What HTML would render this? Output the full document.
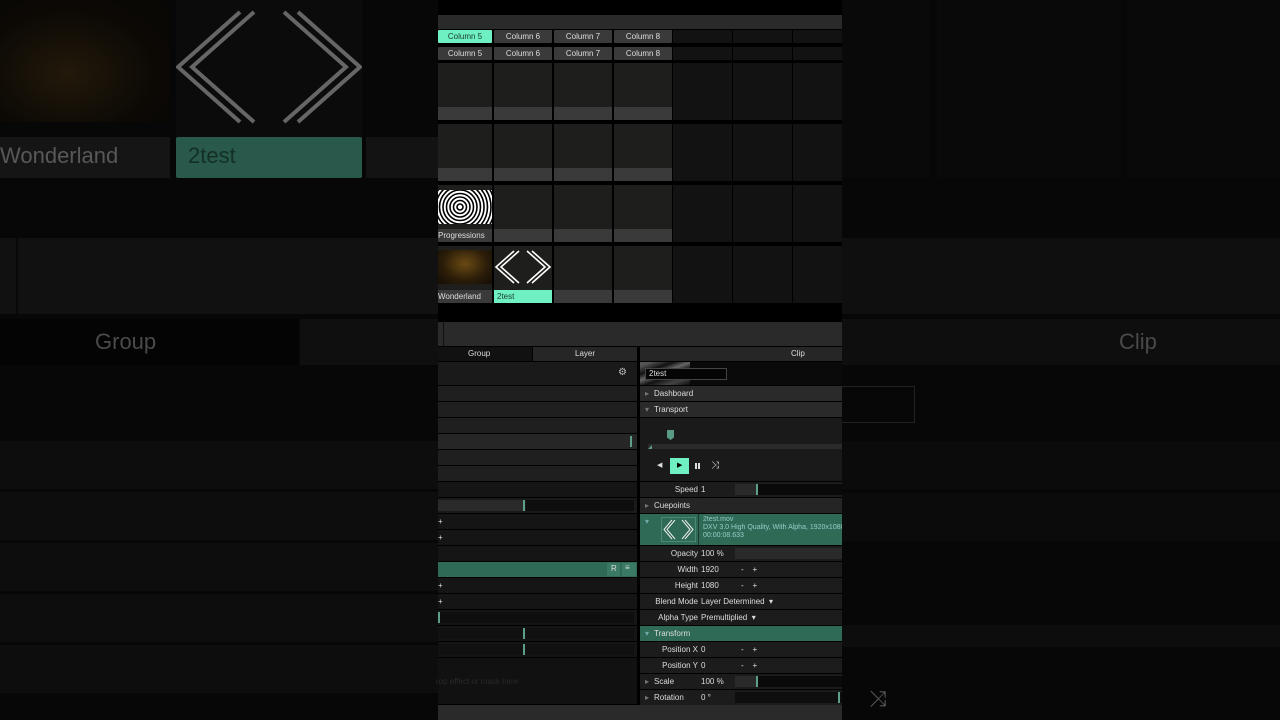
<!DOCTYPE html>
<html><head><meta charset="utf-8"><style>
*{margin:0;padding:0;box-sizing:border-box}
body{width:1280px;height:720px;background:#070707;position:relative;overflow:hidden;font-family:"Liberation Sans",sans-serif;}
div{position:absolute}
.t{font-size:8px;color:#ddd;white-space:nowrap}
.hd{background:#3a3a3a;color:#ddd;font-size:8px;text-align:center;line-height:13px;border-radius:1px}
.cell{background:#1e1e1c}
.strip{background:#3a3a3a}
.em{background:#121212}
.row{left:438px;width:199px;height:15px;background:#1f1f1f}
.rr{left:640px;width:202px;height:15px;background:#1c1c1c}
.lab{left:640px;width:58px;text-align:right;font-size:8px;color:#ddd;line-height:15px}
.val{left:701px;font-size:8px;color:#ddd;line-height:15px}
</style></head><body>
<!-- left blurred background -->
<div style="left:0;top:0;width:170px;height:122px;background:radial-gradient(ellipse at 40% 60%,#22190a,#0c0905 60%,#080705)"></div>
<div style="left:0;top:137px;width:170px;height:41px;background:#151515"></div>
<div style="left:0;top:143px;font-size:22px;color:#585858">Wonderland</div>
<div style="left:176px;top:0;width:186px;height:178px;background:#0b0b0b"></div>
<svg style="position:absolute;left:176px;top:0" width="186" height="137"><g fill="none" stroke="#666" stroke-width="4"><path d="M64 12 L2 67 L64 122"/><path d="M78 12 L16 67 L78 122"/><path d="M122 12 L184 67 L122 122"/><path d="M108 12 L170 67 L108 122"/></g></svg>
<div style="left:176px;top:137px;width:186px;height:41px;background:#28594a;border-radius:2px"></div>
<div style="left:188px;top:143px;font-size:22px;color:#143026">2test</div>
<div style="left:366px;top:137px;width:72px;height:41px;background:#131313"></div>
<div style="left:0;top:238px;width:438px;height:76px;background:#111"></div>
<div style="left:16px;top:238px;width:2px;height:76px;background:#080808"></div>
<div style="left:0;top:319px;width:298px;height:46px;background:#040404"></div>
<div style="left:300px;top:319px;width:138px;height:46px;background:#0f0f0f"></div>
<div style="left:95px;top:329px;font-size:22px;color:#4a4a4a">Group</div>
<div style="left:0;top:441px;width:438px;height:48px;background:#0d0d0d"></div>
<div style="left:0;top:492px;width:438px;height:48px;background:#0d0d0d"></div>
<div style="left:0;top:543px;width:438px;height:48px;background:#0d0d0d"></div>
<div style="left:0;top:594px;width:438px;height:48px;background:#0d0d0d"></div>
<div style="left:0;top:645px;width:438px;height:48px;background:#0d0d0d"></div>
<!-- right blurred background -->
<div style="left:842px;top:0;width:88px;height:178px;background:#090909"></div>
<div style="left:937px;top:0;width:183px;height:178px;background:#090909"></div>
<div style="left:1127px;top:0;width:153px;height:178px;background:#090909"></div>
<div style="left:842px;top:238px;width:438px;height:76px;background:#0f0f0f"></div>
<div style="left:842px;top:319px;width:438px;height:46px;background:#0e0e0e"></div>
<div style="left:1119px;top:329px;font-size:22px;color:#4a4a4a">Clip</div>
<div style="left:838px;top:386px;width:77px;height:37px;border:1px solid #222"></div>
<div style="left:842px;top:441px;width:438px;height:48px;background:#0b0b0b"></div>
<div style="left:842px;top:493px;width:438px;height:48px;background:#0b0b0b"></div>
<div style="left:842px;top:625px;width:438px;height:22px;background:#0d0d0d"></div>
<div style="left:869px;top:686px;font-size:22px;color:#555">&#x2928;</div>

<!-- center panel -->
<div style="left:438px;top:0;width:404px;height:720px;background:#000"></div>
<div style="left:438px;top:15px;width:404px;height:14px;background:#2a2a2a"></div>
<div class="hd" style="left:438px;top:30px;width:54px;background:#6ef0c2;color:#1a3a30">Column 5</div>
<div class="hd" style="left:494px;top:30px;width:58px">Column 6</div>
<div class="hd" style="left:554px;top:30px;width:58px">Column 7</div>
<div class="hd" style="left:614px;top:30px;width:58px">Column 8</div>
<div class="em" style="left:673px;top:30px;width:59px;height:13px"></div>
<div class="em" style="left:733px;top:30px;width:59px;height:13px"></div>
<div class="em" style="left:793px;top:30px;width:49px;height:13px"></div>
<div class="hd" style="left:438px;top:47px;width:54px">Column 5</div>
<div class="hd" style="left:494px;top:47px;width:58px">Column 6</div>
<div class="hd" style="left:554px;top:47px;width:58px">Column 7</div>
<div class="hd" style="left:614px;top:47px;width:58px">Column 8</div>
<div class="em" style="left:673px;top:47px;width:59px;height:13px"></div>
<div class="em" style="left:733px;top:47px;width:59px;height:13px"></div>
<div class="em" style="left:793px;top:47px;width:49px;height:13px"></div>

<div class="cell" style="left:438px;top:63px;width:54px;height:57px"></div><div class="strip" style="left:438px;top:107px;width:54px;height:13px"></div>
<div class="cell" style="left:494px;top:63px;width:58px;height:57px"></div><div class="strip" style="left:494px;top:107px;width:58px;height:13px"></div>
<div class="cell" style="left:554px;top:63px;width:58px;height:57px"></div><div class="strip" style="left:554px;top:107px;width:58px;height:13px"></div>
<div class="cell" style="left:614px;top:63px;width:58px;height:57px"></div><div class="strip" style="left:614px;top:107px;width:58px;height:13px"></div>
<div class="em" style="left:673px;top:63px;width:59px;height:57px"></div><div class="em" style="left:733px;top:63px;width:59px;height:57px"></div><div class="em" style="left:793px;top:63px;width:49px;height:57px"></div>

<div class="cell" style="left:438px;top:124px;width:54px;height:57px"></div><div class="strip" style="left:438px;top:168px;width:54px;height:13px"></div>
<div class="cell" style="left:494px;top:124px;width:58px;height:57px"></div><div class="strip" style="left:494px;top:168px;width:58px;height:13px"></div>
<div class="cell" style="left:554px;top:124px;width:58px;height:57px"></div><div class="strip" style="left:554px;top:168px;width:58px;height:13px"></div>
<div class="cell" style="left:614px;top:124px;width:58px;height:57px"></div><div class="strip" style="left:614px;top:168px;width:58px;height:13px"></div>
<div class="em" style="left:673px;top:124px;width:59px;height:57px"></div><div class="em" style="left:733px;top:124px;width:59px;height:57px"></div><div class="em" style="left:793px;top:124px;width:49px;height:57px"></div>

<div class="cell" style="left:438px;top:185px;width:54px;height:57px"></div>
<svg style="position:absolute;left:438px;top:190px" width="54" height="34"><rect width="54" height="34" fill="#fff"/><g fill="none" stroke="#000" stroke-width="1.6"><circle cx="22" cy="17" r="3"/><circle cx="22" cy="17" r="6.5"/><circle cx="22" cy="17" r="10"/><circle cx="22" cy="17" r="13.5"/><circle cx="22" cy="17" r="17"/><circle cx="22" cy="17" r="20.5"/><circle cx="22" cy="17" r="24"/><circle cx="22" cy="17" r="27.5"/><circle cx="22" cy="17" r="31"/><circle cx="22" cy="17" r="34.5"/></g></svg>
<div class="strip" style="left:438px;top:229px;width:54px;height:13px"></div><div class="t" style="left:438px;top:231px">Progressions</div>
<div class="cell" style="left:494px;top:185px;width:58px;height:57px"></div><div class="strip" style="left:494px;top:229px;width:58px;height:13px"></div>
<div class="cell" style="left:554px;top:185px;width:58px;height:57px"></div><div class="strip" style="left:554px;top:229px;width:58px;height:13px"></div>
<div class="cell" style="left:614px;top:185px;width:58px;height:57px"></div><div class="strip" style="left:614px;top:229px;width:58px;height:13px"></div>
<div class="em" style="left:673px;top:185px;width:59px;height:57px"></div><div class="em" style="left:733px;top:185px;width:59px;height:57px"></div><div class="em" style="left:793px;top:185px;width:49px;height:57px"></div>

<div class="cell" style="left:438px;top:246px;width:54px;height:57px"></div>
<div style="left:438px;top:250px;width:54px;height:34px;background:radial-gradient(ellipse at 50% 40%,#6a4a14,#2a1c08 60%,#140e05)"></div>
<div class="strip" style="left:438px;top:290px;width:54px;height:13px"></div><div class="t" style="left:438px;top:292px">Wonderland</div>
<div class="cell" style="left:494px;top:246px;width:58px;height:57px"></div>
<svg style="position:absolute;left:494px;top:250px" width="58" height="34"><g fill="none" stroke="#fff" stroke-width="1.6"><path d="M20 1 L2 17 L20 33"/><path d="M25 1 L7 17 L25 33"/><path d="M33 1 L51 17 L33 33"/><path d="M38 1 L56 17 L38 33"/></g></svg>
<div style="left:494px;top:290px;width:58px;height:13px;background:#6ef0c2"></div><div class="t" style="left:497px;top:292px;color:#1a3a30">2test</div>
<div class="cell" style="left:554px;top:246px;width:58px;height:57px"></div><div class="strip" style="left:554px;top:290px;width:58px;height:13px"></div>
<div class="cell" style="left:614px;top:246px;width:58px;height:57px"></div><div class="strip" style="left:614px;top:290px;width:58px;height:13px"></div>
<div class="em" style="left:673px;top:246px;width:59px;height:57px"></div><div class="em" style="left:733px;top:246px;width:59px;height:57px"></div><div class="em" style="left:793px;top:246px;width:49px;height:57px"></div>

<div style="left:438px;top:322px;width:404px;height:24px;background:#2a2a2a"></div>
<div style="left:443px;top:322px;width:1px;height:24px;background:#111"></div>
<div style="left:438px;top:347px;width:94px;height:14px;background:#111"></div>
<div class="t" style="left:468px;top:349px">Group</div>
<div style="left:533px;top:347px;width:104px;height:14px;background:#262626"></div>
<div class="t" style="left:575px;top:349px">Layer</div>
<div style="left:640px;top:347px;width:202px;height:14px;background:#262626"></div>
<div class="t" style="left:791px;top:349px">Clip</div>

<div style="left:438px;top:362px;width:199px;height:23px;background:#1a1a1a"></div>
<div style="left:618px;top:367px;font-size:10px;color:#bbb">&#9881;</div>
<div class="row" style="top:386px"></div>
<div class="row" style="top:402px"></div>
<div class="row" style="top:418px"></div>
<div class="row" style="top:434px;background:#262626"></div><div style="left:630px;top:436px;width:2px;height:11px;background:#5aa08a"></div>
<div class="row" style="top:450px"></div>
<div class="row" style="top:466px"></div>
<div class="row" style="top:482px;background:#151515"></div>
<div class="row" style="top:498px;background:#1a1a1a"></div><div style="left:438px;top:500px;width:85px;height:11px;background:#2a2a2a"></div><div style="left:523px;top:500px;width:2px;height:11px;background:#5aa08a"></div><div style="left:526px;top:500px;width:108px;height:11px;background:#0e0e0e"></div>
<div class="row" style="top:514px;background:#151515"></div><div class="t" style="left:438px;top:517px">+</div>
<div class="row" style="top:530px;background:#151515"></div><div class="t" style="left:438px;top:533px">+</div>
<div class="row" style="top:546px;background:#151515"></div>
<div class="row" style="top:562px;background:#2e6a55"></div>
<div style="left:607px;top:563px;width:13px;height:13px;background:#3a7a65"></div><div class="t" style="left:611px;top:564px">R</div>
<div style="left:622px;top:563px;width:14px;height:13px;background:#3a7a65"></div><div class="t" style="left:625px;top:563px">&#8801;</div>
<div class="row" style="top:578px;background:#151515"></div><div class="t" style="left:438px;top:581px">+</div>
<div class="row" style="top:594px;background:#151515"></div><div class="t" style="left:438px;top:597px">+</div>
<div class="row" style="top:610px;background:#151515"></div><div style="left:438px;top:612px;width:196px;height:11px;background:#0e0e0e"></div><div style="left:438px;top:612px;width:2px;height:11px;background:#5aa08a"></div>
<div class="row" style="top:626px;background:#151515"></div><div style="left:438px;top:628px;width:196px;height:11px;background:#111"></div><div style="left:523px;top:628px;width:2px;height:11px;background:#5aa08a"></div>
<div class="row" style="top:642px;background:#151515"></div><div style="left:438px;top:644px;width:196px;height:11px;background:#111"></div><div style="left:523px;top:644px;width:2px;height:11px;background:#5aa08a"></div>
<div class="row" style="top:658px;height:46px;background:#111"></div>
<div class="t" style="left:436px;top:677px;color:#2a2a2a">rop effect or mask here</div>

<div style="left:640px;top:362px;width:202px;height:23px;background:#0a0a0a"></div>
<div style="left:640px;top:362px;width:50px;height:23px;background:linear-gradient(160deg,#555 10%,#111 30%,#666 45%,#111 60%,#444 80%,#0a0a0a)"></div>
<div style="left:645px;top:368px;width:82px;height:12px;background:#050505;border:1px solid #444"></div>
<div class="t" style="left:649px;top:369px">2test</div>
<div class="rr" style="top:386px;background:#2a2a2a"></div><div class="t" style="left:645px;top:389px;color:#777">&#9656;</div><div class="t" style="left:654px;top:389px">Dashboard</div>
<div class="rr" style="top:402px;background:#2a2a2a"></div><div class="t" style="left:645px;top:405px;color:#777">&#9662;</div><div class="t" style="left:654px;top:405px">Transport</div>
<div class="rr" style="top:418px;height:63px;background:#1a1a1a"></div>
<div style="left:648px;top:444px;width:194px;height:5px;background:#2a2a2a"></div>
<div style="left:667px;top:430px;width:7px;height:10px;background:#5a9a85;clip-path:polygon(0 0,100% 0,100% 75%,50% 100%,0 75%)"></div>
<div style="left:648px;top:445px;width:4px;height:4px;background:#5a9a85;clip-path:polygon(100% 0,100% 100%,0 100%)"></div>
<div class="t" style="left:657px;top:461px;font-size:7px">&#9664;</div>
<div style="left:670px;top:458px;width:19px;height:16px;background:#6ef0c2"></div><div class="t" style="left:677px;top:461px;font-size:7px;color:#000">&#9654;</div>
<div style="left:695px;top:463px;width:2px;height:6px;background:#ddd"></div><div style="left:698px;top:463px;width:2px;height:6px;background:#ddd"></div>
<div class="t" style="left:711px;top:460px;font-size:10px">&#x2928;</div>
<div class="rr" style="top:482px"></div><div class="lab" style="top:482px">Speed</div><div class="val" style="top:482px">1</div>
<div style="left:735px;top:484px;width:22px;height:11px;background:#2a2a2a"></div><div style="left:756px;top:484px;width:2px;height:11px;background:#5aa08a"></div><div style="left:758px;top:484px;width:84px;height:11px;background:#0a0a0a"></div>
<div class="rr" style="top:498px;background:#252525"></div><div class="t" style="left:645px;top:501px;color:#777">&#9656;</div><div class="t" style="left:654px;top:501px">Cuepoints</div>
<div class="rr" style="top:514px;height:31px;background:#2e6a55"></div>
<div class="t" style="left:645px;top:517px;color:#7aa">&#9662;</div>
<svg style="position:absolute;left:661px;top:517px" width="35" height="25"><rect x="0.5" y="0.5" width="34" height="24" fill="none" stroke="#4a8a75"/><g fill="none" stroke="#eee" stroke-width="1"><path d="M11 3 L3 12.5 L11 22"/><path d="M14 3 L6 12.5 L14 22"/><path d="M21 3 L29 12.5 L21 22"/><path d="M24 3 L32 12.5 L24 22"/></g></svg>
<div style="left:698px;top:514px;width:1px;height:31px;background:#1a3a30"></div>
<div class="t" style="left:703px;top:516px;font-size:7px;color:#9cc;line-height:8px;width:139px;overflow:hidden">2test.mov<br>DXV 3.0 High Quality, With Alpha, 1920x1080<br>00:00:08.633</div>
<div class="rr" style="top:546px"></div><div class="lab" style="top:546px">Opacity</div><div class="val" style="top:546px">100 %</div><div style="left:735px;top:548px;width:107px;height:11px;background:#2a2a2a"></div>
<div class="rr" style="top:562px"></div><div class="lab" style="top:562px">Width</div><div class="val" style="top:562px">1920</div><div class="val" style="left:741px;top:562px">-&nbsp;&nbsp;&nbsp;&nbsp;+</div>
<div class="rr" style="top:578px"></div><div class="lab" style="top:578px">Height</div><div class="val" style="top:578px">1080</div><div class="val" style="left:741px;top:578px">-&nbsp;&nbsp;&nbsp;&nbsp;+</div>
<div class="rr" style="top:594px"></div><div class="lab" style="top:594px">Blend Mode</div><div class="val" style="top:594px">Layer Determined &nbsp;&#9662;</div>
<div class="rr" style="top:610px"></div><div class="lab" style="top:610px">Alpha Type</div><div class="val" style="top:610px">Premultiplied &nbsp;&#9662;</div>
<div class="rr" style="top:626px;background:#2e6a55"></div><div class="t" style="left:645px;top:629px;color:#7aa">&#9662;</div><div class="t" style="left:654px;top:629px">Transform</div>
<div class="rr" style="top:642px"></div><div class="lab" style="top:642px">Position X</div><div class="val" style="top:642px">0</div><div class="val" style="left:741px;top:642px">-&nbsp;&nbsp;&nbsp;&nbsp;+</div>
<div class="rr" style="top:658px"></div><div class="lab" style="top:658px">Position Y</div><div class="val" style="top:658px">0</div><div class="val" style="left:741px;top:658px">-&nbsp;&nbsp;&nbsp;&nbsp;+</div>
<div class="rr" style="top:674px"></div><div class="t" style="left:645px;top:677px;color:#777">&#9656;</div><div class="t" style="left:654px;top:677px">Scale</div><div class="val" style="top:674px">100 %</div>
<div style="left:735px;top:676px;width:22px;height:11px;background:#2a2a2a"></div><div style="left:756px;top:676px;width:2px;height:11px;background:#5aa08a"></div><div style="left:758px;top:676px;width:84px;height:11px;background:#0a0a0a"></div>
<div class="rr" style="top:690px"></div><div class="t" style="left:645px;top:693px;color:#777">&#9656;</div><div class="t" style="left:654px;top:693px">Rotation</div><div class="val" style="top:690px">0 °</div>
<div style="left:735px;top:692px;width:107px;height:11px;background:#0e0e0e"></div><div style="left:838px;top:692px;width:2px;height:11px;background:#5aa08a"></div>
<div style="left:698px;top:482px;width:1px;height:16px;background:#111"></div>
<div style="left:638px;top:347px;width:2px;height:358px;background:#000"></div>
<div style="left:438px;top:705px;width:404px;height:15px;background:#2a2a2a"></div>
</body></html>
